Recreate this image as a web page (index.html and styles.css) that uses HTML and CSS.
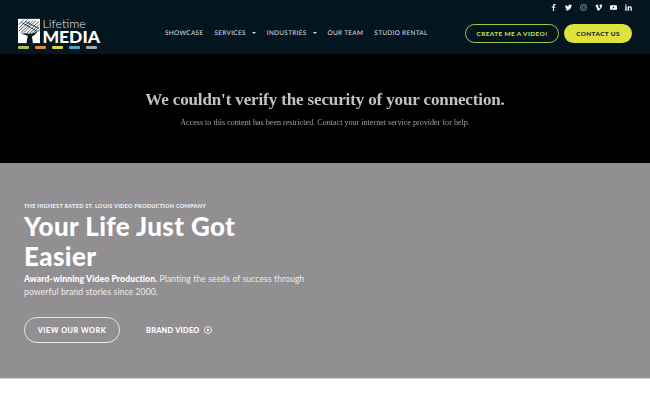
FILE: index.html
```html
<!DOCTYPE html>
<html lang="en">
<head>
    <meta charset="UTF-8">
    <meta name="viewport" content="width=device-width, initial-scale=1.0">
    <title>Lifetime Media</title>
    <link rel="stylesheet" href="styles.css">
</head>
<body>
    <header class="site-header">
        <a class="logo" href="#">
            <div class="logo-top">
                <svg class="logo-mark" width="24" height="26" viewBox="0 0 24 26">
                    <rect x="0" y="0" width="24" height="26" fill="#fff"/>
                    <path d="M1 6 L6 1 M1 10 L10 1 M1 13 L13 2 M3 15 L16 2 M6 15 L19 2 M9 16 L22 3 M12 16 L23 6 M15 16 L23 9 M18 15 L23 12 M4 4 L20 13 M8 3 L22 10" stroke="#04161f" stroke-width="0.8" fill="none"/>
                    <path d="M9 26 L10.500 18 Q6 16.500 3 16 Q9 15 12 16 Q17 15.500 21 14 Q17 18 15 19 L16 26 Z" fill="#04161f"/>
                </svg>
                <div class="logo-words">
                    <span class="logo-life">Lifetime</span>
                    <span class="logo-media">MEDIA</span>
                </div>
            </div>
            <div class="logo-bars">
                <span class="bar-green"></span>
                <span class="bar-orange"></span>
                <span class="bar-yellow"></span>
                <span class="bar-blue"></span>
                <span class="bar-grey"></span>
            </div>
        </a>

        <nav class="main-nav">
            <a href="#">Showcase</a>
            <a href="#" class="has-sub">Services</a>
            <a href="#" class="has-sub">Industries</a>
            <a href="#">Our Team</a>
            <a href="#">Studio Rental</a>
        </nav>

        <div class="header-right">
            <div class="socials">
                <svg width="7" height="7" viewBox="0 0 24 24"><path d="M14 24V13h4l1-4h-5V6.500c0-1.300.5-2.200 2.300-2.200H19V.4C18.500.3 17.200 0 15.700 0 12.400 0 10 2 10 5.800V9H6v4h4v11z"/></svg>
                <svg width="7" height="7" viewBox="0 0 24 24"><path d="M24 4.600a10 10 0 0 1-2.800.8 5 5 0 0 0 2.200-2.700 10 10 0 0 1-3.100 1.200 4.900 4.900 0 0 0-8.400 4.500A14 14 0 0 1 1.700 3.200a4.900 4.900 0 0 0 1.500 6.600 5 5 0 0 1-2.200-.6 4.900 4.900 0 0 0 3.900 4.900 5 5 0 0 1-2.200.1 4.900 4.900 0 0 0 4.600 3.400A10 10 0 0 1 0 19.600 14 14 0 0 0 21.500 7.100 10 10 0 0 0 24 4.600z"/></svg>
                <svg width="7" height="7" viewBox="0 0 24 24"><rect x="2" y="2" width="20" height="20" rx="6" fill="none" stroke="currentColor" stroke-width="2.500"/><circle cx="12" cy="12" r="4.500" fill="none" stroke="currentColor" stroke-width="2.500"/><circle cx="18" cy="6" r="1.500"/></svg>
                <svg width="7" height="7" viewBox="0 0 24 24"><path d="M24 6.500c-.1 2.300-1.700 5.500-4.900 9.600C15.800 20.400 13 22.500 10.800 22.500c-1.400 0-2.600-1.300-3.500-3.900L5.300 11.500C4.700 8.900 4 7.600 3.300 7.600c-.2 0-.8.400-1.800 1.100L.4 7.300l3.600-3.200c1.600-1.400 2.800-2.100 3.600-2.200 1.900-.2 3.100 1.100 3.500 3.900.5 3 .8 4.900 1 5.600.6 2.500 1.200 3.800 1.900 3.800.5 0 1.300-.8 2.300-2.400 1-1.600 1.600-2.800 1.700-3.700.1-1.400-.4-2-1.700-2-.6 0-1.200.1-1.800.4C15.700 3.400 18 1.500 21.500 1.600c2.500.1 2.600 2.100 2.500 4.900z"/></svg>
                <svg width="7" height="7" viewBox="0 0 24 24"><path fill-rule="evenodd" d="M4 4h16a4 4 0 0 1 4 4v8a4 4 0 0 1-4 4H4a4 4 0 0 1-4-4V8a4 4 0 0 1 4-4zM9.500 8.500v7l6.500-3.500z"/></svg>
                <svg width="7" height="7" viewBox="0 0 24 24"><path d="M1 8h4.500v15H1zM3.200 1a2.600 2.600 0 1 1 0 5.200 2.600 2.600 0 0 1 0-5.200zM9 8h4.300v2c.6-1.200 2.200-2.400 4.500-2.400 4.700 0 5.600 3.100 5.600 7.100V23h-4.500v-7.400c0-1.800 0-4-2.500-4s-2.900 1.900-2.900 3.900V23H9z"/></svg>
            </div>
            <div class="header-btns">
                <a href="#" class="btn-outline">Create me a video!</a>
                <a href="#" class="btn-solid">Contact us</a>
            </div>
        </div>
    </header>

    <section class="notice">
        <h2>We couldn't verify the security of your connection.</h2>
        <p>Access to this content has been restricted. Contact your internet service provider for help.</p>
    </section>

    <section class="hero">
        <div class="eyebrow">The highest rated St. Louis video production company</div>
        <h1>Your Life Just Got Easier</h1>
        <p class="lead"><strong>Award-winning Video Production.</strong> Planting the seeds of success through powerful brand stories since 2000.</p>
        <div class="hero-actions">
            <a href="#" class="btn-ghost">View our work</a>
            <a href="#" class="link-video">Brand video
                <svg width="8" height="8" viewBox="0 0 24 24"><circle cx="12" cy="12" r="10.500" fill="none" stroke="currentColor" stroke-width="2.500"/><path d="M9 7l8 5-8 5z" fill="currentColor"/></svg>
            </a>
        </div>
    </section>
</body>
</html>
```

FILE: styles.css
```css
* {
    box-sizing: border-box;
}

body {
    margin: 0;
    font-family: "Lato", "Open Sans", sans-serif;
    background-color: #fff;
}

a {
    text-decoration: none;
    color: inherit;
}

.site-header {
    height: 54px;
    background-color: #03151f;
    display: flex;
    padding: 0 18px;
}

.logo {
    width: 82px;
    padding-top: 18px;
    color: #fff;
    flex-shrink: 0;
}

.logo-top {
    display: flex;
    gap: 2px;
}

.logo-mark {
    display: block;
}

.logo-words {
    display: flex;
    flex-direction: column;
}

.logo-life {
    font-weight: 300;
    font-size: 12.500px;
    line-height: 12px;
    color: #e6e9ea;
}

.logo-media {
    font-weight: 900;
    font-size: 17.500px;
    line-height: 14px;
}

.logo-bars {
    display: flex;
    gap: 6px;
    margin-top: 2px;
}

.logo-bars span {
    width: 11px;
    height: 3px;
    border-radius: 1px;
}

.bar-green { background-color: #a9c44b; }
.bar-orange { background-color: #d9913a; }
.bar-yellow { background-color: #e3d53c; }
.bar-blue { background-color: #4fa3d1; }
.bar-grey { background-color: #a5a7a8; }

.main-nav {
    display: flex;
    align-items: center;
    gap: 11px;
    margin-left: 65px;
    height: 54px;
    padding-top: 12px;
    font-size: 6.400px;
    font-weight: 500;
    letter-spacing: 0.33px;
    text-transform: uppercase;
    color: #d5dadc;
    text-rendering: geometricPrecision;
}

.has-sub {
    display: flex;
    align-items: center;
}

.has-sub::after {
    content: "";
    border-left: 2.500px solid transparent;
    border-right: 2.500px solid transparent;
    border-top: 2.500px solid #d5dadc;
    margin-left: 6px;
}

.header-right {
    margin-left: auto;
    display: flex;
    flex-direction: column;
    align-items: flex-end;
}

.socials {
    display: flex;
    gap: 8px;
    height: 24px;
    padding-top: 4px;
    color: #fff;
}

.socials svg {
    fill: currentColor;
    display: block;
}

.socials svg:nth-child(3) {
    opacity: 0.6;
}

.header-btns {
    display: flex;
    gap: 5px;
}

.btn-outline,
.btn-solid {
    height: 19px;
    border-radius: 10px;
    font-size: 6.400px;
    font-weight: 900;
    letter-spacing: 0.4px;
    text-transform: uppercase;
    display: flex;
    align-items: center;
    justify-content: center;
}

.btn-outline {
    width: 94px;
    border: 1px solid #a9c44b;
    color: #c5da55;
}

.btn-solid {
    width: 68px;
    background-color: #dfe23c;
    color: #14202a;
}

.notice {
    height: 109px;
    background-color: #000;
    text-align: center;
    font-family: "Liberation Serif", serif;
    padding-top: 36px;
}

.notice h2 {
    margin: 0;
    font-size: 17px;
    line-height: 20px;
    font-weight: 700;
    letter-spacing: -0.13px;
    color: #c2c2c2;
    will-change: transform;
}

.notice p {
    margin: 7px 0 0;
    font-size: 8.100px;
    line-height: 12px;
    color: #a0a0a0;
    will-change: transform;
}

.hero {
    height: 216px;
    background-color: #918f92;
    padding: 39px 24px 0;
    color: #fff;
    border-bottom: 1px solid #d5d5d5;
}

.eyebrow {
    font-size: 5.500px;
    line-height: 8px;
    font-weight: 900;
    letter-spacing: 0.3px;
    text-transform: uppercase;
    color: #f2f2f2;
}

.hero h1 {
    margin: 1px 0 0;
    width: 240px;
    font-size: 26px;
    line-height: 30px;
    font-weight: 900;
    letter-spacing: 0.38px;
}

.lead {
    margin: 2px 0 0;
    width: 290px;
    font-size: 8.600px;
    line-height: 12.500px;
    letter-spacing: 0.1px;
    color: #ececec;
}

.lead strong {
    color: #fff;
    font-weight: 900;
}

.hero-actions {
    display: flex;
    align-items: center;
    margin-top: 19px;
}

.btn-ghost {
    width: 96px;
    height: 26px;
    border: 1px solid #e4e4e4;
    border-radius: 13px;
    font-size: 7.300px;
    font-weight: 900;
    letter-spacing: 0.5px;
    text-transform: uppercase;
    display: flex;
    align-items: center;
    justify-content: center;
}

.link-video {
    margin-left: 26px;
    font-size: 7.300px;
    font-weight: 900;
    letter-spacing: 0.3px;
    text-transform: uppercase;
    display: flex;
    align-items: center;
    gap: 4px;
}
```
